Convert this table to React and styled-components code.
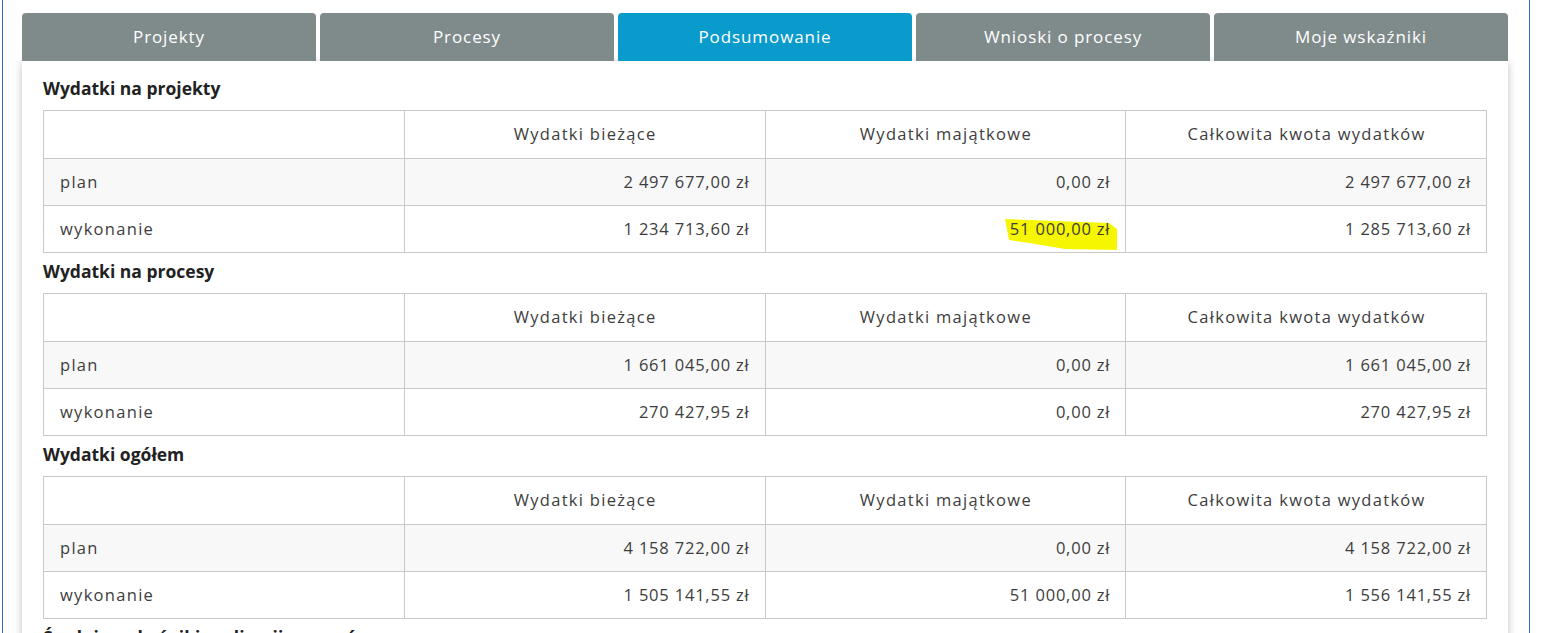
import React from "react";
import styled, { createGlobalStyle } from "styled-components";

const GlobalStyle = createGlobalStyle`
  body {
    margin: 0;
    background: #ffffff;
    font-family: "Open Sans", "Liberation Sans", sans-serif;
    overflow: hidden;
  }
`;

const tabs = ["Projekty", "Procesy", "Podsumowanie", "Wnioski o procesy", "Moje wskaźniki"];

const sections = [
    {
        title: "Wydatki na projekty",
        plan: ["2 497 677,00 zł", "0,00 zł", "2 497 677,00 zł"],
        done: ["1 234 713,60 zł", "51 000,00 zł", "1 285 713,60 zł"],
        mark: 1,
    },
    {
        title: "Wydatki na procesy",
        plan: ["1 661 045,00 zł", "0,00 zł", "1 661 045,00 zł"],
        done: ["270 427,95 zł", "0,00 zł", "270 427,95 zł"],
    },
    {
        title: "Wydatki ogółem",
        plan: ["4 158 722,00 zł", "0,00 zł", "4 158 722,00 zł"],
        done: ["1 505 141,55 zł", "51 000,00 zł", "1 556 141,55 zł"],
    },
];

const App = () => {
    return (
        <React.Fragment>
            <GlobalStyle />
            <Frame>
                <TabBar>
                    {tabs.map((t) => (
                        <Tab key={t} active={t === "Podsumowanie"}>{t}</Tab>
                    ))}
                </TabBar>
                <Panel>
                    {sections.map((s) => (
                        <Section key={s.title}>
                            <Heading>{s.title}</Heading>
                            <Table>
                                <tbody>
                                    <Row head>
                                        <LabelCell />
                                        <HeadCell>Wydatki bieżące</HeadCell>
                                        <HeadCell>Wydatki majątkowe</HeadCell>
                                        <HeadCell>Całkowita kwota wydatków</HeadCell>
                                    </Row>
                                    <Row striped>
                                        <LabelCell>plan</LabelCell>
                                        {s.plan.map((v, i) => (
                                            <NumCell key={i}>{v}</NumCell>
                                        ))}
                                    </Row>
                                    <Row>
                                        <LabelCell>wykonanie</LabelCell>
                                        {s.done.map((v, i) => (
                                            <NumCell key={i}>
                                                {s.mark === i ? (
                                                    <Marked>
                                                        <MarkStroke viewBox="0 0 112 31" preserveAspectRatio="none">
                                                            <path d="M0 0 L104 4 L112 10 L112 31 L60 30 L30 25 L4 21 Z" fill="#f6f600" />
                                                        </MarkStroke>
                                                        <MarkText>{v}</MarkText>
                                                    </Marked>
                                                ) : v}
                                            </NumCell>
                                        ))}
                                    </Row>
                                </tbody>
                            </Table>
                        </Section>
                    ))}
                    <Heading>Średnie wskaźniki realizacji procesów</Heading>
                </Panel>
            </Frame>
        </React.Fragment>
    );
};

const Frame = styled.div`
    margin-left: 2px;
    width: 1528px;
    height: 633px;
    border-left: 1px solid #2f6fb5;
    border-right: 1px solid #2f6fb5;
    padding: 13px 0 0 19px;
    box-sizing: border-box;
`;

const TabBar = styled.div`
    width: 1486px;
    display: grid;
    grid-template-columns: repeat(5, 1fr);
    gap: 4px;
`;

const Tab = styled.div`
    height: 48px;
    padding-bottom: 1px;
    box-sizing: border-box;
    display: flex;
    align-items: center;
    justify-content: center;
    border-radius: 4px 4px 0 0;
    background: ${(p) => (p.active ? "#0a9bcd" : "#7f8b8b")};
    color: #ffffff;
    font-size: 17px;
    letter-spacing: 0.9px;
    font-family: "Open Sans", "Lato", sans-serif;
`;

const Panel = styled.div`
    width: 1486px;
    box-sizing: border-box;
    padding: 9px 21px 0 21px;
    background: #ffffff;
    box-shadow: 0 2px 8px rgba(0, 0, 0, 0.25);
    height: 600px;
`;

const Section = styled.div`
    display: flex;
    flex-direction: column;
`;

const Heading = styled.div`
    padding-top: 6px;
    height: 24px;
    margin-bottom: 10px;
    font-size: 17.5px;
    font-weight: 700;
    color: #222222;
    line-height: 24px;
`;

const Table = styled.table`
    width: 1444px;
    border-collapse: collapse;
    table-layout: fixed;
    font-family: "Open Sans", "Lato", sans-serif;
    font-size: 16.5px;
    letter-spacing: 0.8px;
    color: #3d3d3d;
`;

const Row = styled.tr`
    height: ${(p) => (p.head ? "48px" : "47px")};
    background: ${(p) => (p.striped ? "#f8f8f8" : "#ffffff")};
`;

const Cell = styled.td`
    border: 1px solid #c9c9c9;
    padding: 0 15px 2px 16px;
    box-sizing: border-box;
`;

const LabelCell = styled(Cell)`
    letter-spacing: 1.3px;
`;

const HeadCell = styled(Cell)`
    text-align: center;
    letter-spacing: 1.3px;
`;

const NumCell = styled(Cell)`
    text-align: right;
`;

const Marked = styled.span`
    position: relative;
    display: inline-block;
`;

const MarkStroke = styled.svg`
    position: absolute;
    right: -7px;
    top: 2px;
    width: 112px;
    height: 31px;
`;

const MarkText = styled.span`
    position: relative;
`;

export default App;
